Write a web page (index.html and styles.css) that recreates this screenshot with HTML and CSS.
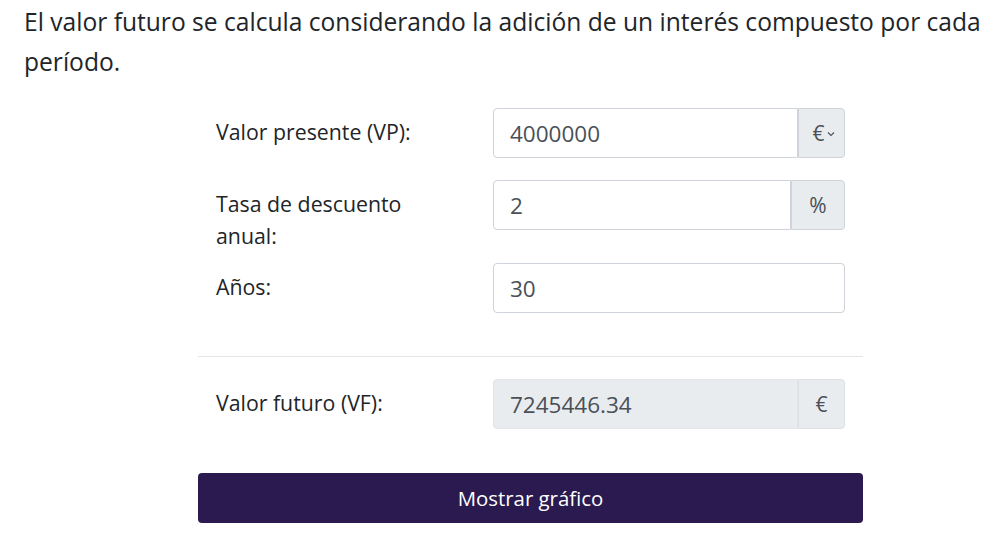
FILE: index.html
```html
<!DOCTYPE html>
<html lang="es">
<head>
<meta charset="utf-8">
<title>Valor futuro</title>
<link rel="stylesheet" href="styles.css">
</head>
<body>
<div class="page">
  <p class="intro">El valor futuro se calcula considerando la adición de un interés compuesto por cada período.</p>
  <form class="calc">
    <div class="rows">
      <div class="row">
        <label class="lbl" for="vp">Valor presente (VP):</label>
        <div class="group">
          <input class="field" id="vp" type="text" value="4000000">
          <span class="addon addon-select">€<svg class="chev" width="8" height="6" viewBox="0 0 8 6"><path d="M1 1.5 L4 4.5 L7 1.5" fill="none" stroke="#495057" stroke-width="1.1"/></svg></span>
        </div>
      </div>
      <div class="row">
        <label class="lbl lbl-two" for="tasa">Tasa de descuento anual:</label>
        <div class="group">
          <input class="field" id="tasa" type="text" value="2">
          <span class="addon addon-pct">%</span>
        </div>
      </div>
      <div class="row">
        <label class="lbl" for="anos">Años:</label>
        <div class="group">
          <input class="field field-solo" id="anos" type="text" value="30">
        </div>
      </div>
    </div>
    <hr class="sep">
    <div class="row">
      <label class="lbl" for="vf">Valor futuro (VF):</label>
      <div class="group">
        <input class="field field-ro" id="vf" type="text" value="7245446.34" readonly>
        <span class="addon addon-eur">€</span>
      </div>
    </div>
    <button class="btn" type="button">Mostrar gráfico</button>
  </form>
</div>
</body>
</html>
```
FILE: styles.css
```css
html, body {
  margin: 0;
  padding: 0;
  background: #fff;
}
body {
  font-family: "Open Sans", "Noto Sans", sans-serif;
  color: #212529;
}
.page {
  padding: 0 0 0 24px;
}
.intro {
  margin: 0;
  padding-top: 2px;
  font-size: 24.6px;
  line-height: 40px;
  width: 975px;
}
.calc {
  margin: 26px 0 0 174px;
  width: 665px;
}
.rows {
  display: flex;
  flex-direction: column;
  gap: 22px;
}
.row {
  display: flex;
  align-items: flex-start;
  padding: 0 18px;
}
.lbl {
  width: 236px;
  margin-right: 41px;
  flex: none;
  font-size: 21.3px;
  line-height: 32px;
  padding-top: 8px;
}
.lbl-two {
  margin-bottom: -11px;
}
.group {
  display: flex;
  width: 352px;
  height: 50px;
}
.field {
  flex: 1;
  min-width: 0;
  box-sizing: border-box;
  height: 50px;
  margin: 0;
  border: 1px solid #ced4da;
  border-radius: 4px 0 0 4px;
  padding: 0 16px;
  font-family: "Open Sans", "Noto Sans", sans-serif;
  font-size: 22.5px;
  color: #495057;
  background: #fff;
  outline: none;
}
.field-solo {
  border-radius: 4px;
}
.field-ro {
  background: #e9ecef;
  border-color: #e1e5e9;
}
.addon {
  flex: none;
  box-sizing: border-box;
  height: 50px;
  display: flex;
  align-items: center;
  justify-content: center;
  background: #e9ecef;
  border: 1px solid #ced4da;
  border-radius: 0 4px 4px 0;
  font-family: "Open Sans", "Noto Sans", sans-serif;
  font-size: 21px;
  color: #495057;
}
.addon-select {
  width: 47px;
  gap: 2px;
  padding-left: 4px;
}
.chev {
  margin-top: 2px;
}
.addon-pct {
  width: 54px;
}
.addon-eur {
  width: 47px;
  border-color: #dde1e5;
}
.sep {
  margin: 43px 0 22px;
  border: 0;
  border-top: 1px solid #e3e6e9;
}
.btn {
  display: block;
  width: 665px;
  height: 50px;
  margin-top: 44px;
  border: 0;
  border-radius: 4px;
  background: #2a1a50;
  color: #fff;
  font-family: "Open Sans", "Noto Sans", sans-serif;
  font-size: 20.4px;
  cursor: pointer;
}
```
